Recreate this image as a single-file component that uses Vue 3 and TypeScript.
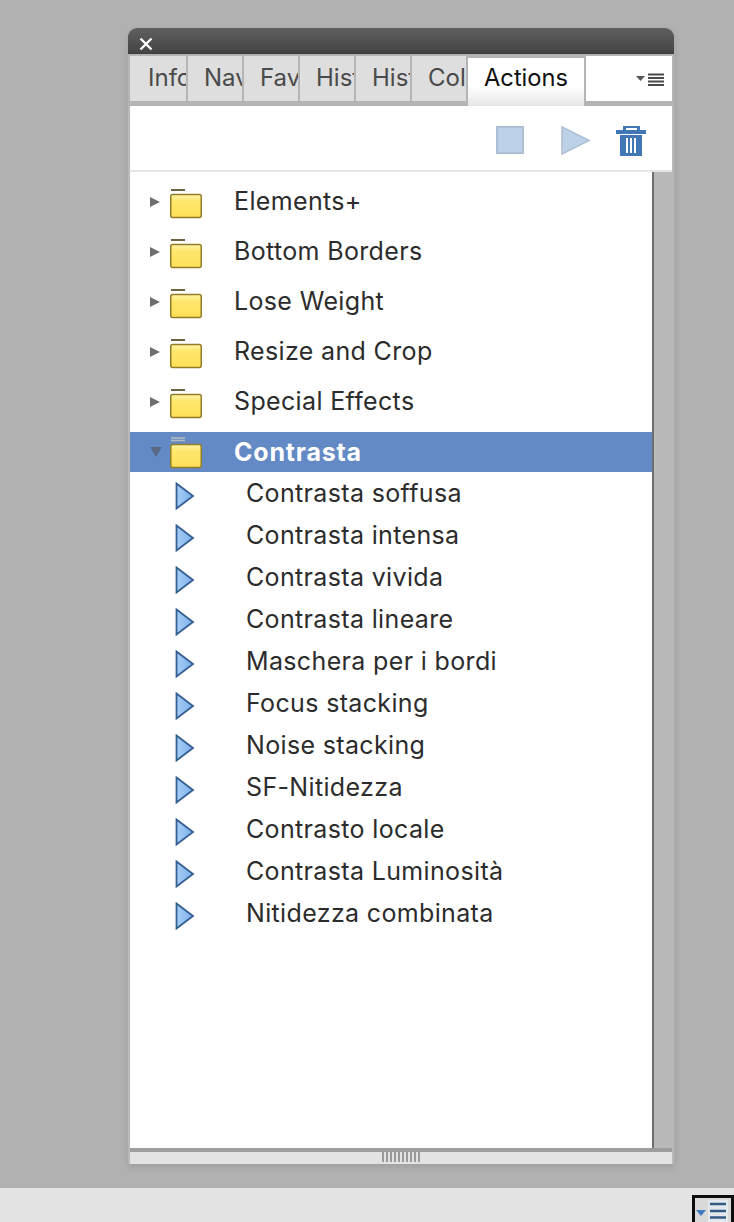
<script setup lang="ts">
const tabs: string[] = ['Info', 'Navigator', 'Favorites', 'History', 'Histogram', 'Color']
const folders: string[] = ['Elements+', 'Bottom Borders', 'Lose Weight', 'Resize and Crop', 'Special Effects']
const actions: string[] = [
  'Contrasta soffusa', 'Contrasta intensa', 'Contrasta vivida', 'Contrasta lineare',
  'Maschera per i bordi', 'Focus stacking', 'Noise stacking', 'SF-Nitidezza',
  'Contrasto locale', 'Contrasta Luminosità', 'Nitidezza combinata'
]
</script>

<template>
  <div class="page">
    <div class="stage">
      <section class="panel">
        <header class="titlebar">
          <svg class="close" width="14" height="14" viewBox="0 0 14 14"><path d="M1.500 1.500 L12.500 12.500 M12.500 1.500 L1.500 12.500" stroke="#fff" stroke-width="2.400" /></svg>
        </header>
        <nav class="tabs">
          <div v-for="t in tabs" :key="t" class="tab"><span>{{ t }}</span></div>
          <div class="tab active"><span>Actions</span></div>
          <div class="tab-rest">
            <svg width="28" height="15" viewBox="0 0 28 15">
              <path d="M0 4 H9 L4.500 9 Z" fill="#555" />
              <path d="M12 2.500 H28 M12 6 H28 M12 9.500 H28 M12 13 H28" stroke="#4a4a4a" stroke-width="1.800" />
            </svg>
          </div>
        </nav>
        <div class="toolbar">
          <svg width="28" height="28" viewBox="0 0 28 28"><rect x="1" y="1" width="26" height="26" fill="#bdd2e9" stroke="#aebfd3" stroke-width="2" /></svg>
          <svg class="play" width="30" height="30" viewBox="0 0 30 30"><path d="M1 1 L28 14.500 L1 28 Z" fill="#bdd2e9" stroke="#aebfd3" stroke-width="1.600" /></svg>
          <svg class="trash" width="30" height="32" viewBox="0 0 30 32">
            <path d="M7 0 H24 V4 H21 V2 H10 V4 H7 Z M0 4 H30 V8 H0 Z M4 9 H26 V30 H4 Z" fill="#4277b6" />
            <path d="M11 12 V27 M15 12 V27 M19 12 V27" stroke="#fff" stroke-width="2" />
          </svg>
        </div>
        <div class="body">
          <div class="list">
            <svg class="defs" width="0" height="0">
              <defs>
                <linearGradient id="fg" x1="0" y1="0" x2="0" y2="1"><stop offset="0" stop-color="#fff3a6" /><stop offset="0.3" stop-color="#ffe76c" /><stop offset="1" stop-color="#ffdf58" /></linearGradient>
                <linearGradient id="ag" x1="0" y1="0" x2="1" y2="0"><stop offset="0" stop-color="#a6cdf7" /><stop offset="1" stop-color="#7fb0ea" /></linearGradient>
              </defs>
            </svg>
            <div v-for="f in folders" :key="f" class="folder">
              <svg class="caret" width="12" height="12" viewBox="0 0 12 12"><path d="M1 1 L11 6 L1 11 Z" fill="#6e6e6e" /></svg>
              <svg class="ficon" width="34" height="30" viewBox="0 0 34 30">
                <path d="M1 1 H15" stroke="#6d6343" stroke-width="2" />
                <rect x="0.750" y="5.500" width="30.500" height="23" rx="2" fill="url(#fg)" stroke="#927d26" stroke-width="1.500" />
              </svg>
              <span class="fname">{{ f }}</span>
            </div>
            <div class="folder open">
              <svg class="caret" width="14" height="12" viewBox="0 0 14 12"><path d="M1 1 H13 L7 11 Z" fill="#596885" /></svg>
              <svg class="ficon" width="34" height="30" viewBox="0 0 34 30">
                <path d="M1 -1 H15 M1 1.500 H15" stroke="#b7bcc4" stroke-width="1.500" />
                <rect x="0.750" y="5.500" width="30.500" height="23" rx="2" fill="url(#fg)" stroke="#927d26" stroke-width="1.500" />
              </svg>
              <span class="fname">Contrasta</span>
            </div>
            <div v-for="a in actions" :key="a" class="action">
              <svg width="20" height="28" viewBox="0 0 20 28">
                <path d="M1.500 1.500 L18 14 L1.500 26.500 Z" fill="url(#ag)" stroke="#345f92" stroke-width="1.800" />
              </svg>
              <span class="aname">{{ a }}</span>
            </div>
          </div>
          <div class="scroll"></div>
        </div>
        <footer class="grip">
          <div class="ticks"></div>
        </footer>
      </section>
    </div>
    <div class="bottom">
      <div class="menu-btn">
        <svg width="37" height="30" viewBox="0 0 37 30">
          <rect x="13" y="2" width="20" height="24" fill="#e4e8ec" />
          <path d="M1 12 H11 L6 18 Z" fill="#3f7cc0" />
          <path d="M15 6 H31 M15 13 H31 M15 19.500 H31" stroke="#335a85" stroke-width="2.400" />
        </svg>
      </div>
    </div>
  </div>
</template>

<style>
html, body { margin: 0; background: #b1b1b1; }
</style>

<style scoped>
.page {
  width: 734px;
  height: 1222px;
  overflow: hidden;
  display: flex;
  flex-direction: column;
  background: #b1b1b1;
  font-family: Inter, "Liberation Sans", sans-serif;
  color: #2c2c2c;
}
.stage {
  height: 1188px;
  flex: none;
  padding: 28px 0 0 128px;
  box-sizing: border-box;
}
.panel {
  width: 546px;
  height: 1136px;
  display: flex;
  flex-direction: column;
  background: #b9b9b9;
  box-shadow: 0 3px 7px rgba(0, 0, 0, 0.12);
  border-radius: 9px 9px 0 0;
}
.titlebar {
  height: 26px;
  flex: none;
  box-sizing: border-box;
  padding: 9px 0 0 11px;
  background: linear-gradient(#5f5f5f, #444);
  border-radius: 9px 9px 0 0;
  border-bottom: 1px solid #3c3c3c;
}
.close { display: block; }
.tabs {
  height: 52px;
  flex: none;
  display: flex;
  gap: 2px;
  padding: 2px 2px 0;
  background: #b4b4b4;
  box-sizing: border-box;
}
.tab {
  width: 54px;
  height: 45px;
  box-sizing: border-box;
  padding: 8px 0 0 16px;
  overflow: hidden;
  background: #dedede;
  color: #4a4a4a;
  font-size: 24px;
  line-height: 28px;
  white-space: nowrap;
}
.tab:first-child { width: 56px; padding-left: 18px; }
.tab.active {
  width: 116px;
  height: 48px;
  margin-top: 2px;
  padding: 6px 0 0 16px;
  background: linear-gradient(#fff 60%, #e6e6e6);
  color: #111;
  font-size: 23.700px;
}
.tab-rest {
  width: 86px;
  height: 45px;
  background: #fff;
  display: flex;
  justify-content: flex-end;
  padding: 16px 8px 0 0;
  box-sizing: border-box;
}
.tab-rest svg { display: block; }
.toolbar {
  height: 64px;
  flex: none;
  margin: 0 2px;
  background: #fff;
  display: flex;
  align-items: flex-start;
  justify-content: flex-end;
  box-sizing: border-box;
  padding: 20px 26px 0 0;
}
.toolbar .play { margin-left: 37px; }
.toolbar .trash { margin-left: 25px; }
.body {
  height: 978px;
  flex: none;
  margin: 0 2px;
  display: flex;
  border-top: 2px solid #e5e5e5;
  box-sizing: border-box;
}
.list {
  width: 522px;
  flex: none;
  box-sizing: border-box;
  padding-top: 4px;
  background: #fff;
}
.defs { position: absolute; }
.scroll {
  width: 20px;
  flex: none;
  box-sizing: border-box;
  border-left: 2px solid #6e6e6e;
  background: #b9b9b9;
}
.folder {
  height: 50px;
  display: flex;
  align-items: center;
  padding-left: 19px;
  box-sizing: border-box;
}
.caret { flex: none; margin-top: 2px; }
.ficon { flex: none; margin: 6px 0 0 9px; overflow: visible; }
.fname {
  margin-left: 30px;
  font-size: 25px;
  line-height: 30px;
  letter-spacing: 0.35px;
}
.folder.open {
  height: 40px;
  margin-top: 6px;
  background: #638ac5;
}
.folder.open .caret { margin-right: -2px; margin-top: 0; }
.folder.open .ficon { margin-top: 4px; }
.folder.open .fname {
  color: #fff;
  font-weight: 700;
  letter-spacing: 0.8px;
}
.action {
  height: 42px;
  display: flex;
  align-items: center;
  padding-left: 45px;
  box-sizing: border-box;
}
.action svg { flex: none; margin-top: 6px; }
.aname {
  margin-left: 51px;
  font-size: 25px;
  line-height: 30px;
  letter-spacing: 0.35px;
}
.grip {
  height: 16px;
  flex: none;
  margin: 0 2px;
  box-sizing: border-box;
  border-top: 4px solid #9d9d9d;
  background: #e3e3e3;
  position: relative;
}
.ticks {
  position: absolute;
  left: 252px;
  top: 0;
  width: 38px;
  height: 10px;
  background: repeating-linear-gradient(90deg, #9a9a9a 0 2px, #e3e3e3 2px 4px);
}
.bottom {
  height: 34px;
  flex: none;
  background: #e3e3e3;
  display: flex;
  justify-content: flex-end;
  align-items: flex-start;
  padding-top: 7px;
  box-sizing: border-box;
}
.menu-btn {
  width: 42px;
  height: 40px;
  flex: none;
  box-sizing: border-box;
  border: 3px solid #0c0c0c;
  background: #d9d9d9;
}
.menu-btn svg { display: block; }
</style>
